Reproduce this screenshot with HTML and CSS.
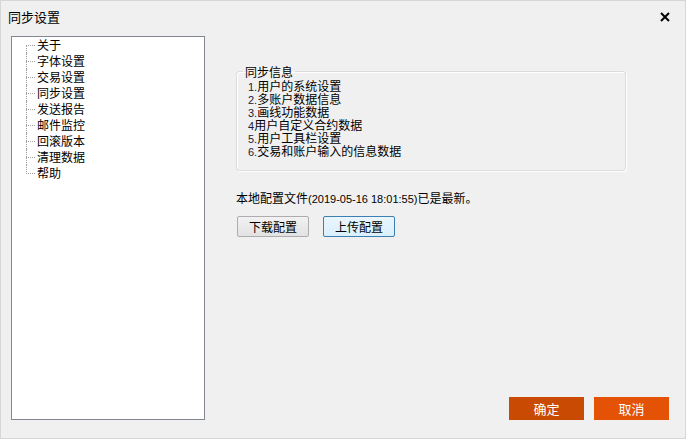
FILE: index.html
```html
<!DOCTYPE html>
<html lang="zh-CN">
<head>
    <meta charset="UTF-8">
    <title>同步设置</title>
    <link rel="stylesheet" href="styles.css">
</head>
<body>
    <div class="dialog">
        <div class="titlebar">
            <span class="title">同步设置</span>
            <svg class="close" width="10" height="10" viewBox="0 0 10 10">
                <path d="M1 1 L9 9 M9 1 L1 9" stroke="#000" stroke-width="2"/>
            </svg>
        </div>

        <div class="main">
            <!-- left tree -->
            <div class="tree">
                <ul>
                    <li>关于</li>
                    <li>字体设置</li>
                    <li>交易设置</li>
                    <li>同步设置</li>
                    <li>发送报告</li>
                    <li>邮件监控</li>
                    <li>回滚版本</li>
                    <li>清理数据</li>
                    <li>帮助</li>
                </ul>
            </div>

            <!-- right panel -->
            <div class="panel">
                <fieldset class="sync-info">
                    <legend>同步信息</legend>
                    <p><span class="num">1.</span>用户的系统设置</p>
                    <p><span class="num">2.</span>多账户数据信息</p>
                    <p><span class="num">3.</span>画线功能数据</p>
                    <p><span class="num">4</span>用户自定义合约数据</p>
                    <p><span class="num">5.</span>用户工具栏设置</p>
                    <p><span class="num">6.</span>交易和账户输入的信息数据</p>
                </fieldset>

                <p class="status">本地配置文件<span class="date">(2019-05-16 18:01:55)</span>已是最新。</p>

                <div class="sync-buttons">
                    <button class="btn">下载配置</button>
                    <button class="btn btn-focus">上传配置</button>
                </div>

                <div class="footer">
                    <button class="action ok">确定</button>
                    <button class="action cancel">取消</button>
                </div>
            </div>
        </div>
    </div>
</body>
</html>
```

FILE: styles.css
```css
* {
    margin: 0;
    padding: 0;
    box-sizing: border-box;
}

body {
    font-family: "Noto Sans CJK SC", "Liberation Sans", sans-serif;
    font-size: 12px;
    color: #000;
    background: #f0f0f0;
}

/* Window */
.dialog {
    width: 686px;
    height: 439px;
    border: 1px solid #d6d6d6;
    background: #f0f0f0;
    display: flex;
    flex-direction: column;
}

.titlebar {
    height: 35px;
    display: flex;
    align-items: center;
    justify-content: space-between;
    padding: 0 15px 4px 7px;
}

.title {
    font-size: 13px;
    line-height: 16px;
}

.close {
    display: block;
}

.main {
    flex: 1;
    display: flex;
    padding: 0 16px 18px 10px;
}

/* Tree */
.tree {
    width: 194px;
    background: #fff;
    border: 1px solid #828790;
    padding: 0 0 0 14px;
}

.tree ul {
    list-style: none;
}

.tree li {
    position: relative;
    height: 16px;
    line-height: 16px;
    padding-left: 11px;
}

.tree li::before {
    content: "";
    position: absolute;
    left: 0;
    top: 8px;
    width: 9px;
    border-top: 1px dotted #a0a0a0;
}

.tree li::after {
    content: "";
    position: absolute;
    left: 0;
    top: 0;
    bottom: 0;
    border-left: 1px dotted #a0a0a0;
}

.tree li:first-child::after {
    top: 8px;
}

.tree li:last-child::after {
    bottom: 7px;
}

/* Right panel */
.panel {
    flex: 1;
    display: flex;
    flex-direction: column;
    padding: 29px 0 0 31px;
}

.sync-info {
    width: 390px;
    border: 1px solid #dcdcdc;
    border-radius: 3px;
    box-shadow: 1px 1px 0 #fff, inset 1px 1px 0 #fff;
    padding: 1px 11px 13px;
}

.sync-info legend {
    font-size: 12px;
    line-height: 13px;
    height: 13px;
    padding: 0 2px;
    margin-left: -5px;
}

.sync-info p {
    height: 13px;
    line-height: 13px;
    white-space: nowrap;
}

.num {
    font-family: "Liberation Sans", sans-serif;
    font-size: 11px;
    line-height: 13px;
    color: #1a1a3a;
}

.status {
    margin-top: 20px;
    height: 14px;
    line-height: 14px;
}

.date {
    font-family: "Liberation Sans", sans-serif;
    font-size: 11px;
    line-height: 14px;
}

.sync-buttons {
    display: flex;
    gap: 14px;
    margin-top: 11px;
    padding-left: 1px;
}

.btn {
    width: 72px;
    height: 21px;
    font-family: inherit;
    font-size: 12px;
    line-height: 19px;
    border: 1px solid #adadad;
    border-radius: 2px;
    background: linear-gradient(#f2f2f2, #e2e2e2);
    color: #000;
}

.btn-focus {
    border-color: #3c7fb1;
    background: linear-gradient(#eaf6fd, #d9f0fc);
}

/* Footer actions */
.footer {
    margin-top: auto;
    display: flex;
    justify-content: flex-end;
    gap: 10px;
}

.action {
    width: 75px;
    height: 23px;
    border: none;
    font-family: inherit;
    font-size: 13px;
    color: #fff;
}

.ok {
    background: #c94a03;
}

.cancel {
    background: #e45206;
}
```
